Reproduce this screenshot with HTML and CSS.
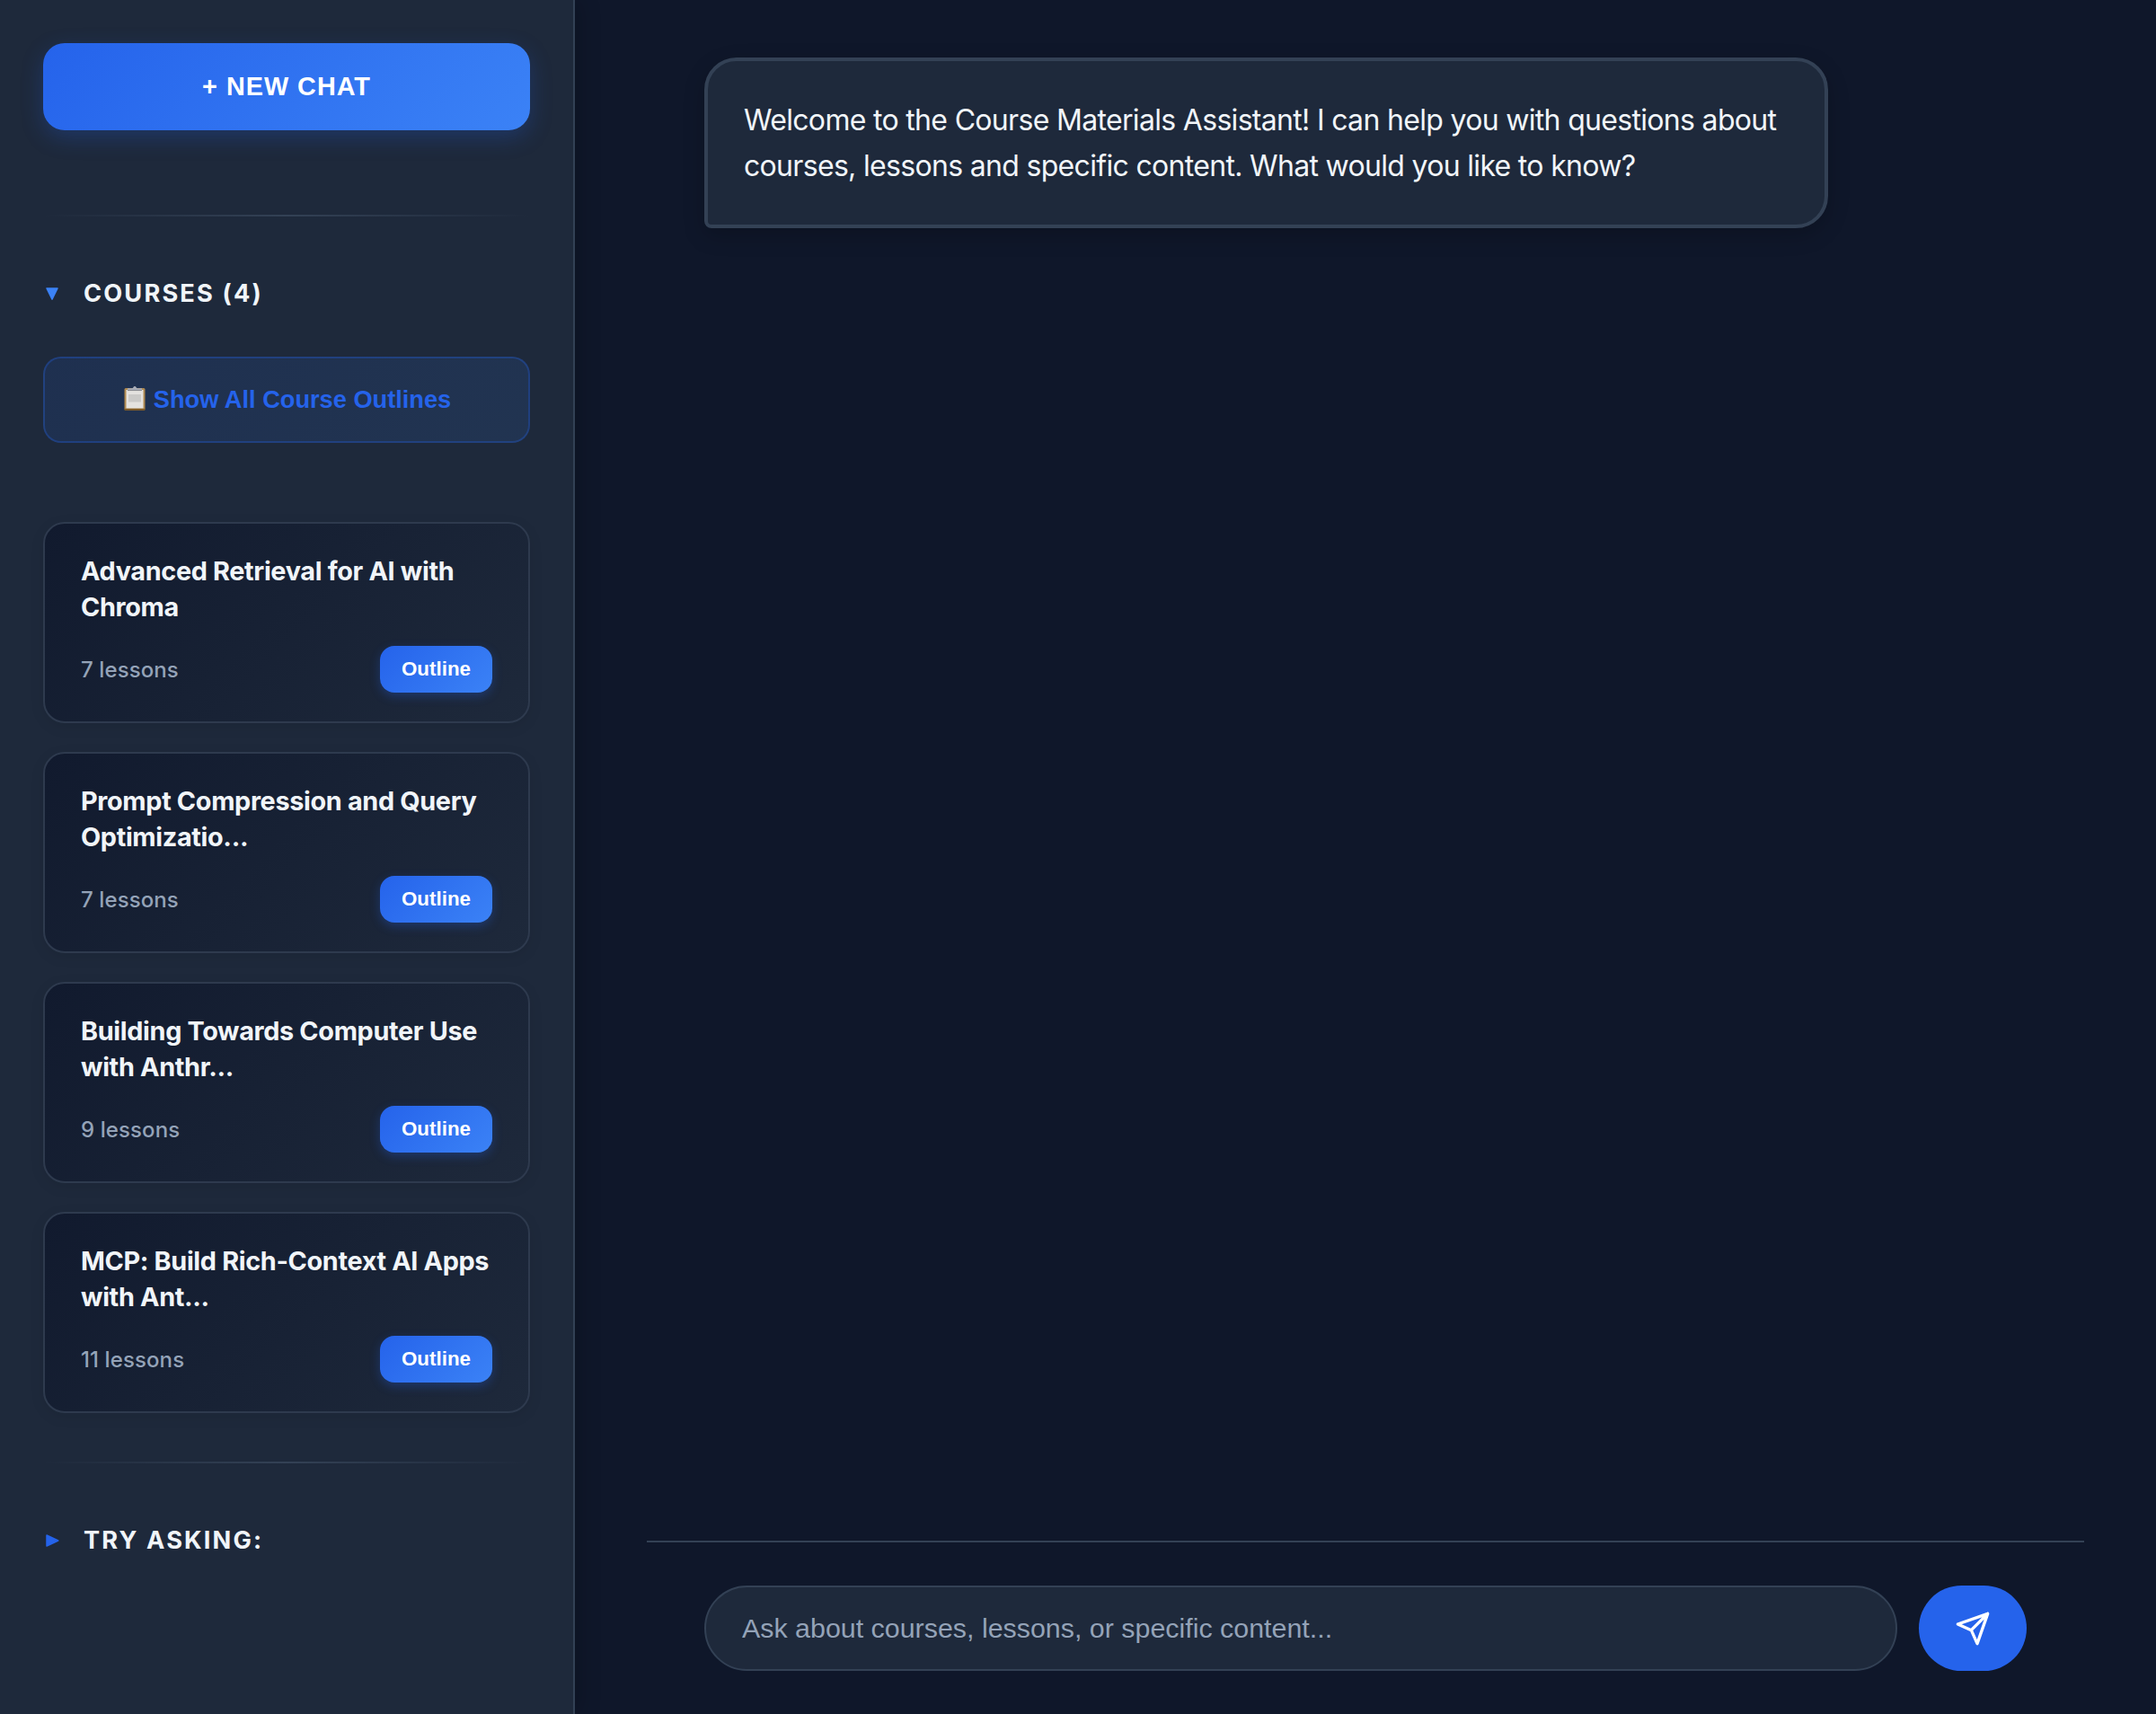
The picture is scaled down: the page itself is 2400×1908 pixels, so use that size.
FILE: index.html
```html
<!DOCTYPE html>
<html lang="en">
<head>
<meta charset="utf-8">
<title>Course Materials Assistant</title>
<link rel="stylesheet" href="styles.css">
</head>
<body>
<div class="app">
  <aside class="sidebar">
    <button class="new-chat">+ NEW CHAT</button>
    <section class="section courses">
      <h2 class="section-title"><svg class="marker marker-open" viewBox="0 0 16 16"><path d="M2 2h12L8 14.200z"/></svg><span>COURSES (4)</span></h2>
      <button class="show-all">
        <svg class="clipboard" viewBox="0 0 24 28"><rect x=".5" y="3" width="23" height="24.500" rx="1.500" fill="#b08a50"/><path d="M.5 26h23v1a1 1 0 0 1-1 1h-21a1 1 0 0 1-1-1z" fill="#7d5a28"/><path d="M2.500 5h19v20.500h-19z" fill="#e4e2df"/><path d="M5 10h14v8.500H5z" fill="#cbcac8"/><path d="M4 3.200h4.500q1.500 0 2-1.200a1.600 1.600 0 0 1 3 0q.5 1.200 2 1.200H20v2.600H4z" fill="#a9adb8"/><path d="M4 5.600h16" stroke="#77777c" stroke-width=".8"/></svg>
        <span>Show All Course Outlines</span>
      </button>
      <div class="course-list">
        <article class="course">
          <h3 class="course-title">Advanced Retrieval for AI with<br>Chroma</h3>
          <div class="course-meta"><span class="lessons">7 lessons</span><button class="outline">Outline</button></div>
        </article>
        <article class="course">
          <h3 class="course-title">Prompt Compression and Query<br>Optimizatio...</h3>
          <div class="course-meta"><span class="lessons">7 lessons</span><button class="outline">Outline</button></div>
        </article>
        <article class="course">
          <h3 class="course-title">Building Towards Computer Use<br>with Anthr...</h3>
          <div class="course-meta"><span class="lessons">9 lessons</span><button class="outline">Outline</button></div>
        </article>
        <article class="course">
          <h3 class="course-title">MCP: Build Rich-Context AI Apps<br>with Ant...</h3>
          <div class="course-meta"><span class="lessons">11 lessons</span><button class="outline">Outline</button></div>
        </article>
      </div>
    </section>
    <section class="section suggestions">
      <h2 class="section-title"><svg class="marker marker-closed" viewBox="0 0 16 16"><path d="M2 2v12L14.800 8z"/></svg><span>TRY ASKING:</span></h2>
    </section>
  </aside>
  <main class="chat">
    <div class="messages">
      <div class="message"><p>Welcome to the Course Materials Assistant! I can help you with questions about<br>courses, lessons and specific content. What would you like to know?</p></div>
    </div>
    <form class="composer">
      <input class="field" type="text" placeholder="Ask about courses, lessons, or specific content...">
      <button class="send" type="button" aria-label="Send"><svg viewBox="0 0 24 24"><path d="M22 2 11 13M22 2l-7 20-4-9-9-4 20-7z"/></svg></button>
    </form>
  </main>
</div>
</body>
</html>
```
FILE: styles.css
```css
* { box-sizing: border-box; margin: 0; padding: 0; }

body {
  height: 1908px;
  overflow: hidden;
  background: #0f172a;
  color: #f1f5f9;
  font-family: Inter, "Liberation Sans", sans-serif;
}

button, input { font-family: "Liberation Sans", Arial, sans-serif; border: 0; }

.app { display: flex; height: 1908px; }

.sidebar {
  position: relative;
  flex: none;
  display: flex;
  flex-direction: column;
  width: 640px;
  padding: 48px;
  background: #1e293b;
  border-right: 2px solid #334155;
  box-shadow: 4px 0 24px rgba(0, 0, 0, .2);
}

.new-chat {
  flex: none;
  height: 97px;
  padding-bottom: 1px;
  border-radius: 24px;
  background: linear-gradient(135deg, #2563eb, #3b82f6);
  box-shadow: 0 8px 24px rgba(37, 99, 235, .25);
  color: #fff;
  font-size: 28.8px;
  font-weight: 700;
  letter-spacing: 1px;
}

.section { display: flex; flex-direction: column; }
.section::before {
  content: "";
  height: 2px;
  background: linear-gradient(90deg, transparent, #334155, transparent);
}
.courses { margin-top: 94px; }
.suggestions { margin-top: 54px; }

.section-title {
  display: flex;
  align-items: center;
  height: 40px;
  margin-top: 65px;
  font-size: 27.2px;
  font-weight: 650;
  letter-spacing: 2.15px;
}
.marker { width: 16px; height: 16px; margin: 2px 27px 0 2px; stroke-width: 1.500; stroke-linejoin: round; }
.marker-open { fill: #3b82f6; stroke: #3b82f6; }
.marker-closed { fill: #2563eb; stroke: #2563eb; }

.show-all {
  display: flex;
  align-items: center;
  justify-content: center;
  gap: 9px;
  height: 96px;
  margin-top: 51px;
  padding-left: 2px;
  border: 2px solid rgba(37, 99, 235, .3);
  border-radius: 20px;
  background: linear-gradient(135deg, rgba(37, 99, 235, .12), rgba(59, 130, 246, .12));
  color: #2563eb;
  font-size: 27.2px;
  font-weight: 700;
}
.clipboard { width: 24px; height: 28px; margin-top: -4px; }

.course-list { display: flex; flex-direction: column; gap: 32px; margin-top: 88px; }
.course {
  height: 224px;
  padding: 33px 40px 31px;
  border: 2px solid #2e3a4e;
  border-radius: 24px;
  background: linear-gradient(135deg, #111a2e, #1e293b);
  box-shadow: 0 4px 16px rgba(0, 0, 0, .08);
}
.course-title {
  font-size: 28.8px;
  font-weight: 650;
  line-height: 40.3px;
  letter-spacing: -.33px;
  white-space: nowrap;
}
.course-meta { display: flex; align-items: center; justify-content: space-between; margin-top: 22px; }
.lessons { padding-top: 2px; color: #94a3b8; font-size: 24px; font-weight: 500; letter-spacing: .1px; }
.outline {
  width: 125px;
  height: 52px;
  border-radius: 16px;
  background: linear-gradient(135deg, #2563eb, #3b82f6);
  box-shadow: 0 4px 12px rgba(37, 99, 235, .3);
  color: #fff;
  font-size: 22.4px;
  font-weight: 700;
}

.chat {
  flex: 1;
  display: flex;
  flex-direction: column;
  width: 1600px;
  padding: 0 80px;
}
.messages { flex: 1; padding: 64px; }
.message {
  width: 1251px;
  padding: 40px;
  border: 4px solid #334155;
  border-radius: 36px 36px 36px 8px;
  background: #1e293b;
  box-shadow: 0 8px 24px rgba(0, 0, 0, .2);
  font-size: 32px;
  line-height: 51.2px;
  letter-spacing: -.68px;
  white-space: nowrap;
}
.composer {
  display: flex;
  gap: 24px;
  height: 193px;
  padding: 48px 64px;
  border-top: 2px solid #334155;
}
.field {
  flex: 1;
  height: 95px;
  padding: 0 40px;
  border: 2px solid #334155;
  border-radius: 48px;
  background: #1e293b;
  color: #f1f5f9;
  font-size: 30.4px;
}
.field::placeholder { color: #94a3b8; opacity: 1; }
.send {
  display: flex;
  align-items: center;
  justify-content: center;
  width: 120px;
  height: 95px;
  border-radius: 48px;
  background: #2563eb;
}
.send svg { width: 40px; height: 40px; fill: none; stroke: #fff; stroke-width: 2; stroke-linecap: round; stroke-linejoin: round; }
```
